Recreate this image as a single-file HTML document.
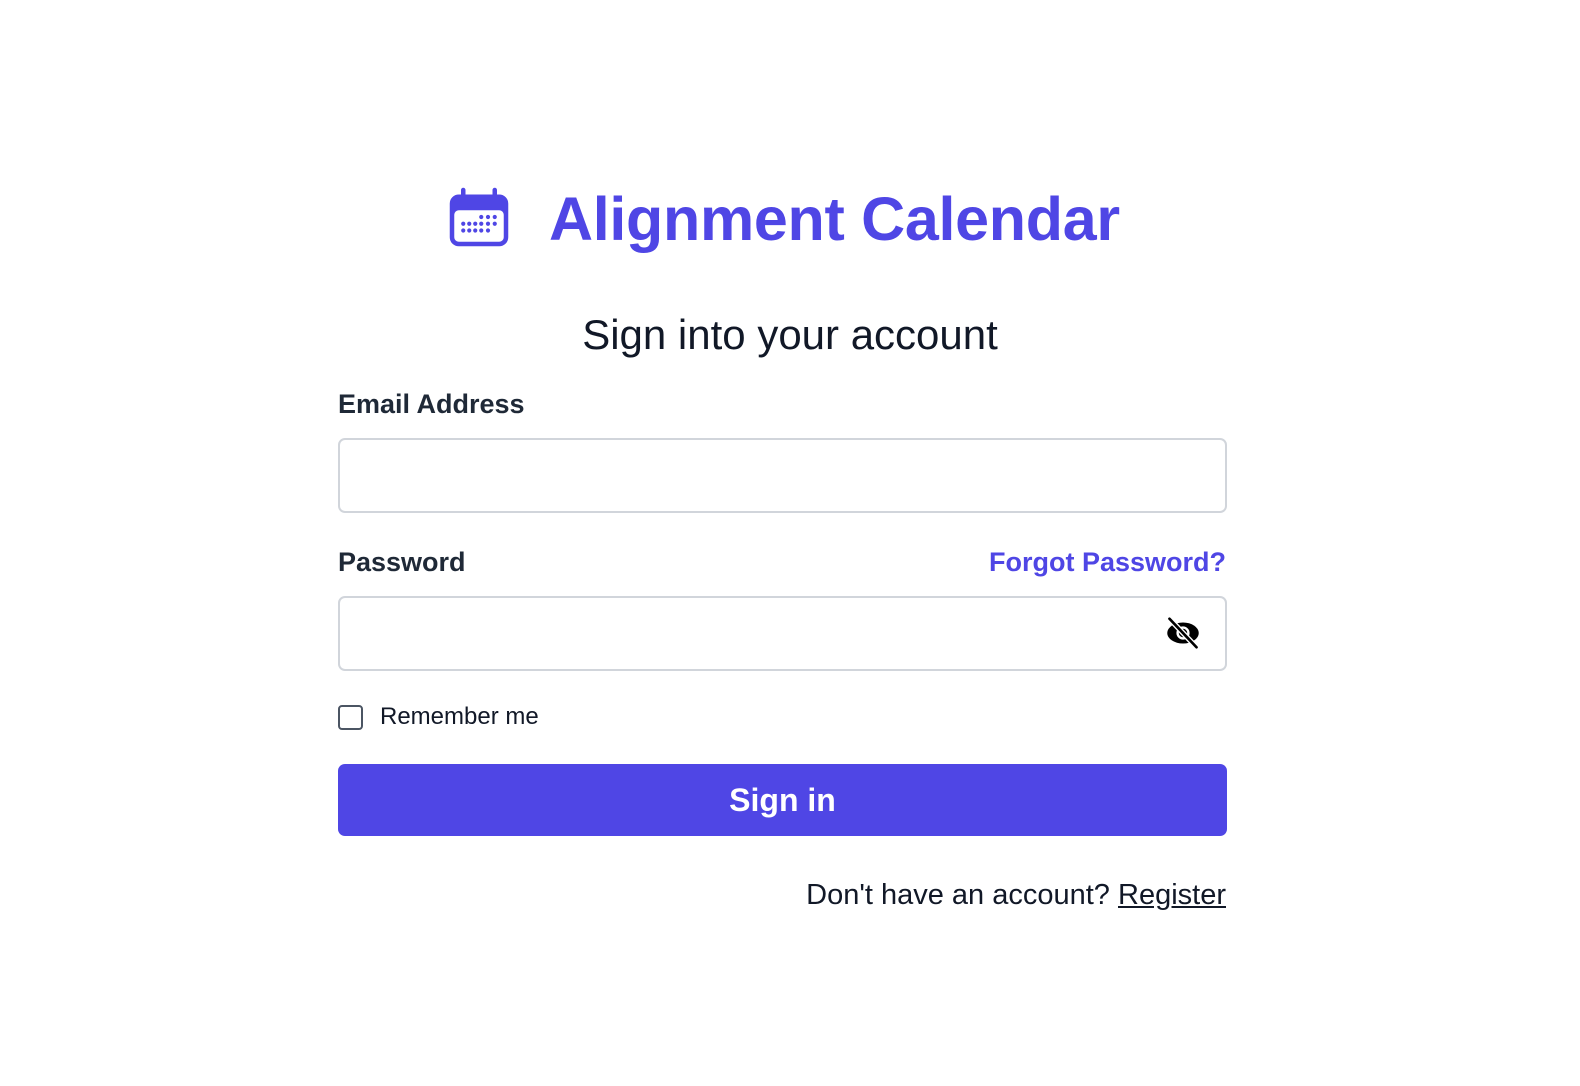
<!DOCTYPE html>
<html><head><meta charset="utf-8"><style>
*{box-sizing:border-box;margin:0;padding:0}
body{width:1580px;height:1086px;background:#fff;font-family:"Liberation Sans",sans-serif;color:#111827;position:relative}
.abs{position:absolute}
.title{left:549px;top:181px;font-size:61px;font-weight:bold;color:#4F46E5;line-height:76px;white-space:nowrap;letter-spacing:-0.3px}
.sub{left:0;width:1580px;text-align:center;top:310px;font-size:42px;line-height:50px;color:#111827}
.lbl{font-size:27px;font-weight:600;line-height:34px;color:#1f2937}
.inp{left:338px;width:889px;height:75px;border:2px solid #d1d5db;border-radius:7px}
.btn{left:338px;top:764px;width:889px;height:72px;background:#4F46E5;border-radius:7px;color:#fff;font-size:32px;font-weight:600;text-align:center;line-height:72px}
</style></head><body>
<svg class="abs" style="left:443px;top:181px" width="72" height="72" viewBox="0 0 24 24" fill="#4F46E5"><path fill-rule="evenodd" d="M6.75 2.25A.75.75 0 017.5 3v1.5h9V3A.75.75 0 0118 3v1.5h.75a3 3 0 013 3v11.25a3 3 0 01-3 3H5.25a3 3 0 01-3-3V7.5a3 3 0 013-3H6V3a.75.75 0 01.75-.75zm13.5 9a1.5 1.5 0 00-1.5-1.5H5.25a1.5 1.5 0 00-1.5 1.5v7.5a1.5 1.5 0 001.5 1.5h13.5a1.5 1.5 0 001.5-1.5v-7.5z"/><g><circle cx="12.75" cy="12" r=".7"/><circle cx="15" cy="12" r=".7"/><circle cx="17.25" cy="12" r=".7"/><circle cx="6.75" cy="14.25" r=".7"/><circle cx="8.75" cy="14.25" r=".7"/><circle cx="10.75" cy="14.25" r=".7"/><circle cx="12.75" cy="14.25" r=".7"/><circle cx="15" cy="14.25" r=".7"/><circle cx="17.25" cy="14.25" r=".7"/><circle cx="6.75" cy="16.5" r=".7"/><circle cx="8.75" cy="16.5" r=".7"/><circle cx="10.75" cy="16.5" r=".7"/><circle cx="12.75" cy="16.5" r=".7"/><circle cx="15" cy="16.5" r=".7"/></g></svg>
<div class="abs title">Alignment Calendar</div>
<div class="abs sub">Sign into your account</div>
<div class="abs lbl" style="left:338px;top:387px">Email Address</div>
<div class="abs inp" style="top:438px"></div>
<div class="abs lbl" style="left:338px;top:545px">Password</div>
<div class="abs lbl" style="right:354px;top:545px;color:#4F46E5">Forgot Password?</div>
<div class="abs inp" style="top:596px"></div>
<svg class="abs" style="left:1164px;top:615px" width="38" height="36" viewBox="0 0 24 24"><ellipse cx="12" cy="12" rx="10.5" ry="7" fill="#000"/><circle cx="12" cy="12" r="3.6" fill="none" stroke="#fff" stroke-width="1.6"/><line x1="3" y1="2.5" x2="21" y2="21.5" stroke="#fff" stroke-width="3.6"/><line x1="3" y1="2.5" x2="21" y2="21.5" stroke="#000" stroke-width="1.8" stroke-linecap="round"/></svg>
<div class="abs" style="left:338px;top:705px;width:25px;height:25px;border:2px solid #4b5563;border-radius:4px"></div>
<div class="abs" style="left:380px;top:702px;font-size:24px;line-height:30px;color:#111827">Remember me</div>
<div class="abs btn">Sign in</div>
<div class="abs" style="right:354px;top:878px;font-size:29px;line-height:34px;color:#111827">Don't have an account? <span style="text-decoration:underline">Register</span></div>
</body></html>
